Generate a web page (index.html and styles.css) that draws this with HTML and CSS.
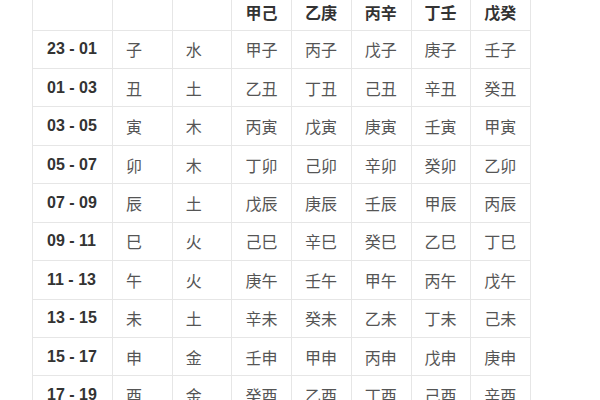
FILE: index.html
```html
<!DOCTYPE html>
<html lang="zh">
<head>
<meta charset="utf-8">
<link rel="stylesheet" href="styles.css">
</head>
<body>
<table class="ganzhi">
  <colgroup><col class="c-time"><col><col><col><col><col><col><col></colgroup>
  <thead>
    <tr><th></th><th></th><th></th><th>甲己</th><th>乙庚</th><th>丙辛</th><th>丁壬</th><th>戊癸</th></tr>
  </thead>
  <tbody>
    <tr><td class="time">23 - 01</td><td>子</td><td>水</td><td>甲子</td><td>丙子</td><td>戊子</td><td>庚子</td><td>壬子</td></tr>
    <tr><td class="time">01 - 03</td><td>丑</td><td>土</td><td>乙丑</td><td>丁丑</td><td>己丑</td><td>辛丑</td><td>癸丑</td></tr>
    <tr><td class="time">03 - 05</td><td>寅</td><td>木</td><td>丙寅</td><td>戊寅</td><td>庚寅</td><td>壬寅</td><td>甲寅</td></tr>
    <tr><td class="time">05 - 07</td><td>卯</td><td>木</td><td>丁卯</td><td>己卯</td><td>辛卯</td><td>癸卯</td><td>乙卯</td></tr>
    <tr><td class="time">07 - 09</td><td>辰</td><td>土</td><td>戊辰</td><td>庚辰</td><td>壬辰</td><td>甲辰</td><td>丙辰</td></tr>
    <tr><td class="time">09 - 11</td><td>巳</td><td>火</td><td>己巳</td><td>辛巳</td><td>癸巳</td><td>乙巳</td><td>丁巳</td></tr>
    <tr><td class="time">11 - 13</td><td>午</td><td>火</td><td>庚午</td><td>壬午</td><td>甲午</td><td>丙午</td><td>戊午</td></tr>
    <tr><td class="time">13 - 15</td><td>未</td><td>土</td><td>辛未</td><td>癸未</td><td>乙未</td><td>丁未</td><td>己未</td></tr>
    <tr><td class="time">15 - 17</td><td>申</td><td>金</td><td>壬申</td><td>甲申</td><td>丙申</td><td>戊申</td><td>庚申</td></tr>
    <tr><td class="time">17 - 19</td><td>酉</td><td>金</td><td>癸酉</td><td>乙酉</td><td>丁酉</td><td>己酉</td><td>辛酉</td></tr>
    <tr><td class="time">19 - 21</td><td>戌</td><td>土</td><td>甲戌</td><td>丙戌</td><td>戊戌</td><td>庚戌</td><td>壬戌</td></tr>
  </tbody>
</table>
</body>
</html>
```
FILE: styles.css
```css
html, body {
  margin: 0;
  padding: 0;
  background: #ffffff;
  overflow: hidden;
}

.ganzhi {
  border-collapse: collapse;
  table-layout: fixed;
  width: 499px;
  margin: -5px 0 0 32px;
  font-family: "Liberation Sans", "Noto Sans CJK SC", sans-serif;
  font-size: 16px;
  color: #555555;
}

.ganzhi .c-time {
  width: 80px;
}

.ganzhi th,
.ganzhi td {
  border: 1px solid #e6e6e6;
  padding: 0 0 0 13px;
  text-align: left;
  vertical-align: middle;
  white-space: nowrap;
  font-weight: normal;
}

.ganzhi thead tr {
  height: 35px;
}

.ganzhi thead th {
  font-weight: bold;
  color: #333333;
  border-top: none;
}

.ganzhi tbody tr {
  height: 38.44px;
}

.ganzhi td.time {
  font-weight: bold;
  color: #333333;
  padding-left: 14px;
}
```
